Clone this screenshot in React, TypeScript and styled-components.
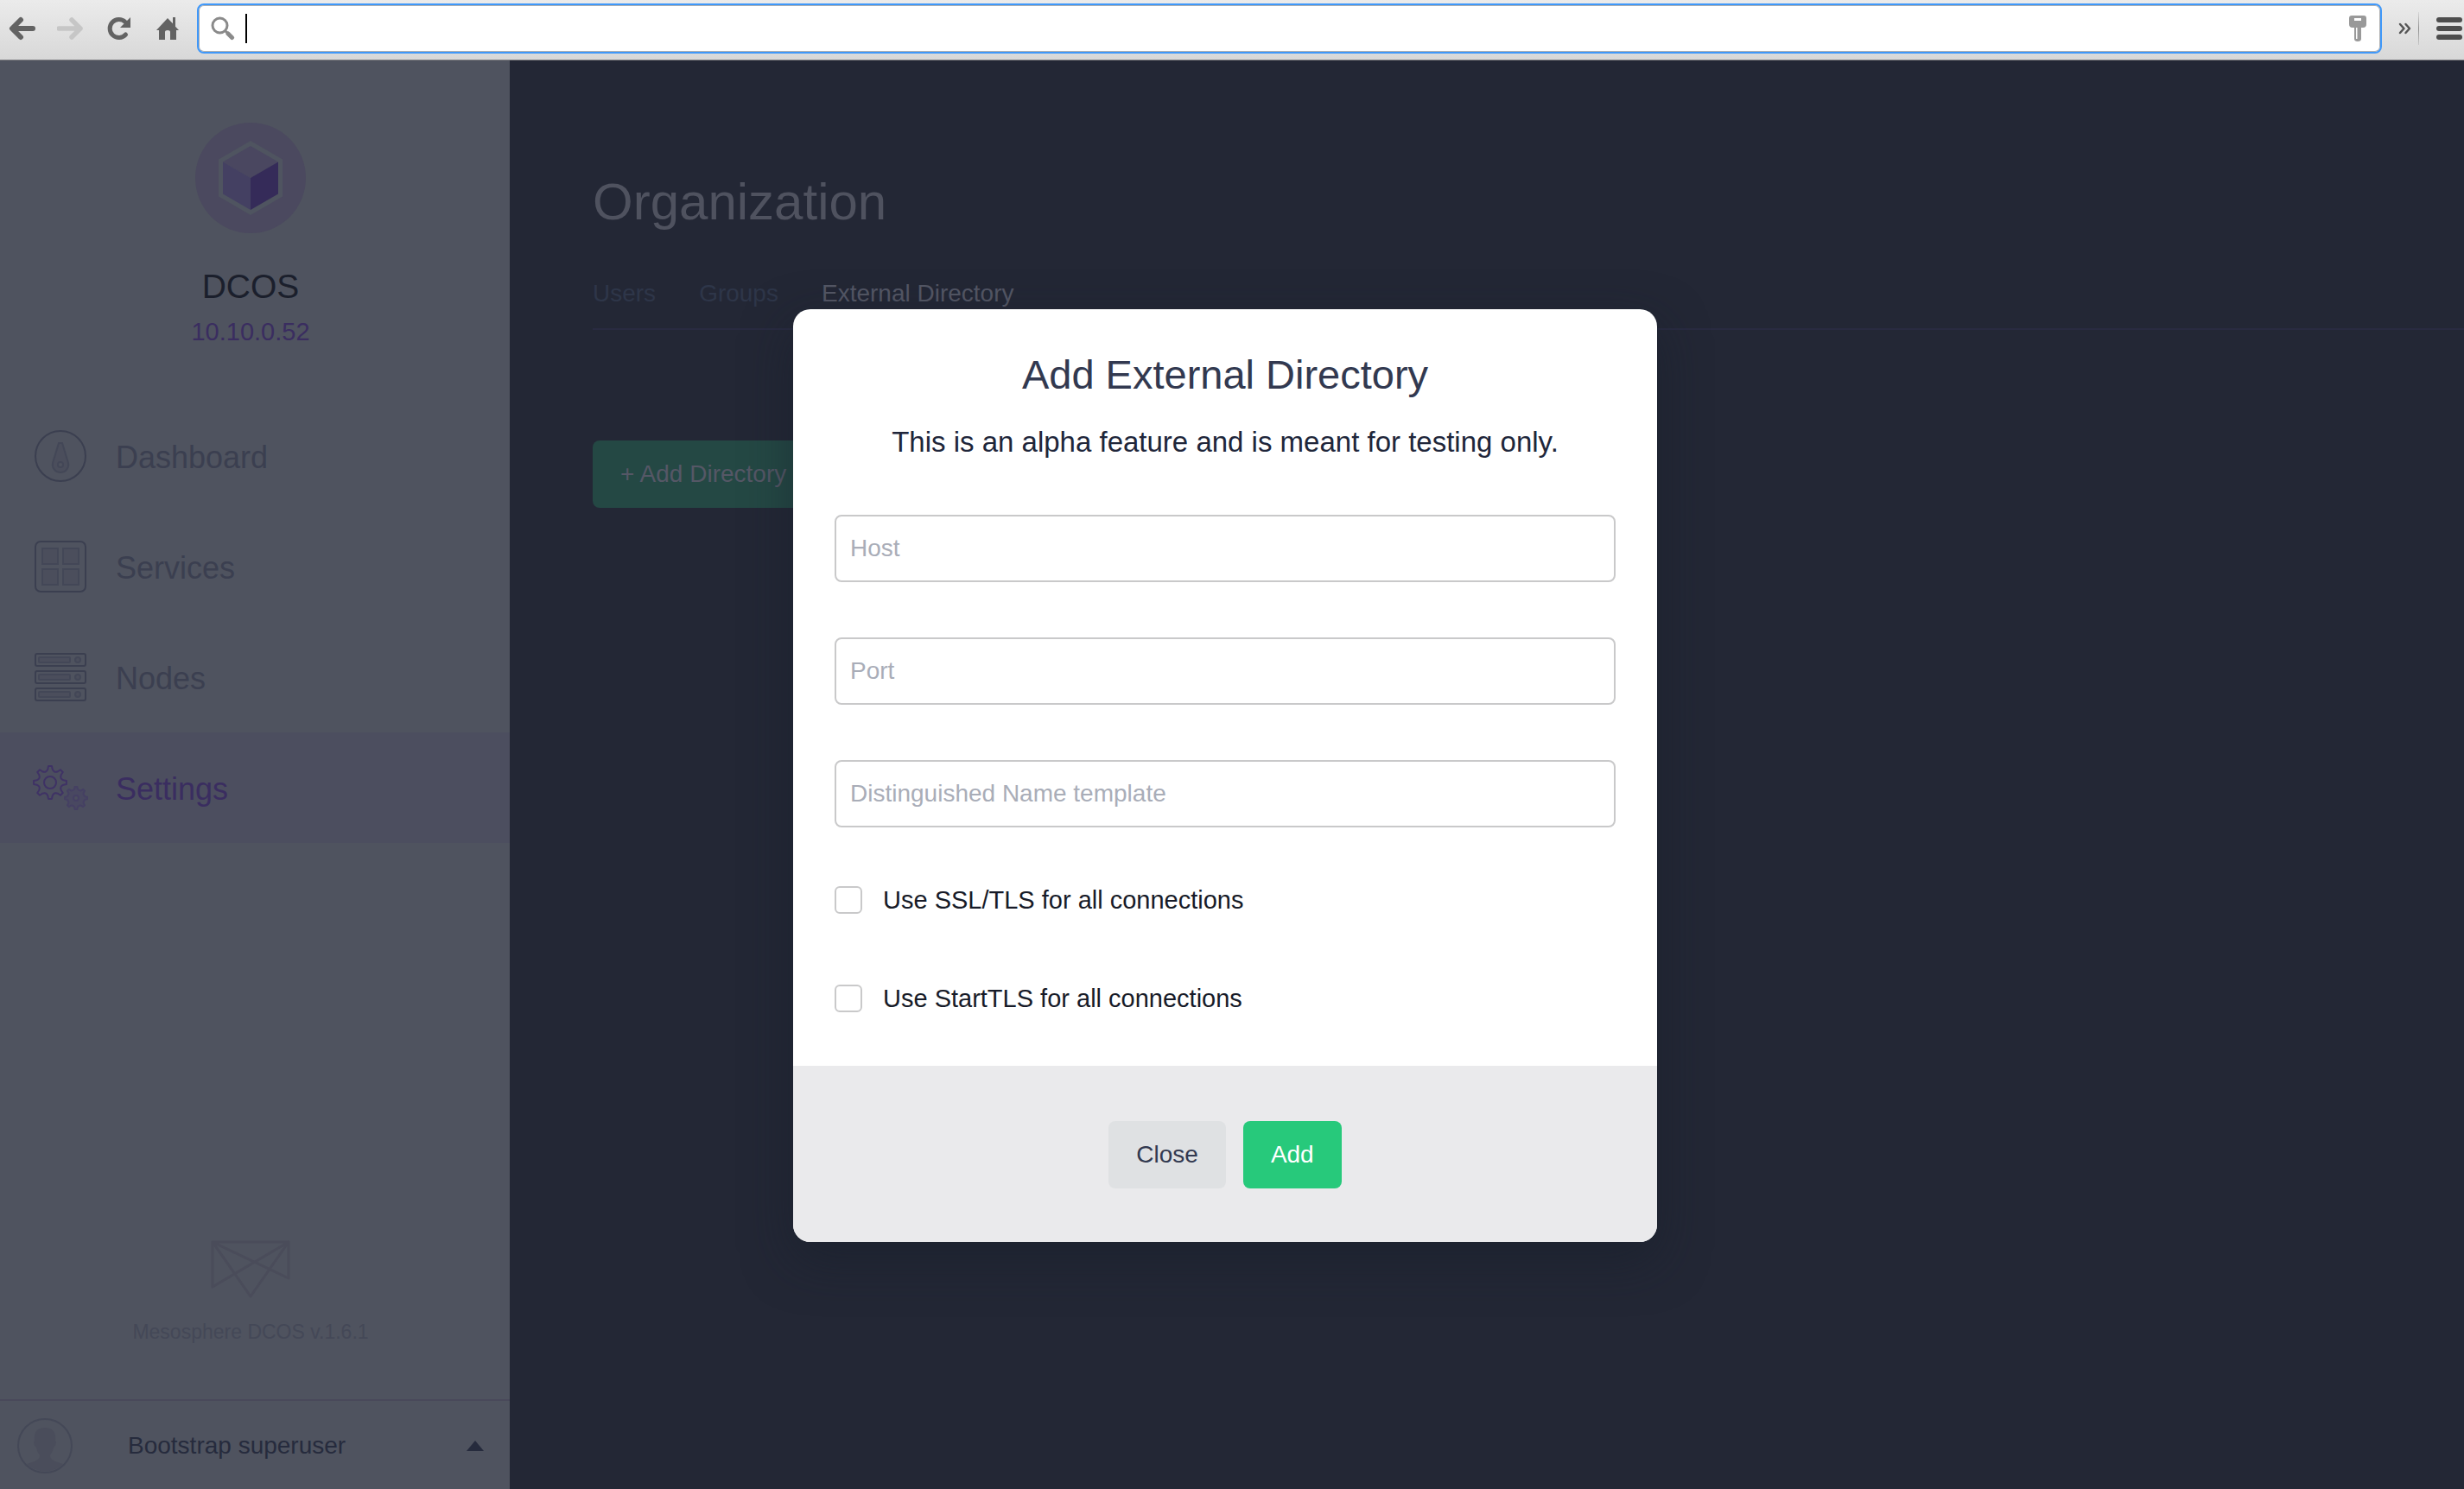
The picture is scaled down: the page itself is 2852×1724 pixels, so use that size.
import React from 'react';
import styled, { createGlobalStyle } from 'styled-components';

const sans = "'Liberation Sans', Arial, Helvetica, sans-serif";

const GlobalStyle = createGlobalStyle`
  *, *::before, *::after { box-sizing: border-box; }
  body { margin: 0; background: #232735; font-family: ${sans}; font-size: 28px; line-height: 32px; }
  button, input { font: inherit; }
  h1, h2, p, ul { margin: 0; padding: 0; font-weight: 400; }
  ul { list-style: none; }
  a { color: inherit; text-decoration: none; }
  svg { display: block; flex: none; }
`;

const Page = styled.div`
  display: flex;
  flex-direction: column;
  min-height: 100vh;
`;

/* ---------- browser toolbar ---------- */

const Toolbar = styled.header`
  display: flex;
  align-items: center;
  padding: 4px 2px 7px 10px;
  background: linear-gradient(#ebebeb, #d8d8d8);
  border-bottom: 1px solid #7d7d80;
`;

const ToolGroup = styled.div`
  display: flex;
  gap: 24px;
  margin-right: 18px;
`;

const ToolButton = styled.button`
  display: flex;
  align-items: center;
  justify-content: center;
  padding: 0;
  border: 0;
  background: none;
`;

const AddressBar = styled.label`
  flex: 1;
  display: flex;
  align-items: center;
  height: 58px;
  padding: 0 16px 0 14px;
  background: #fff;
  border: 2px solid #3f98fa;
  border-radius: 8px;
  box-shadow: inset 0 0 0 1px #b0b0b0;
`;

const Caret = styled.span`
  width: 2px;
  height: 34px;
  margin-left: 12px;
  background: #000;
`;

const AddressInput = styled.input`
  flex: 1;
  min-width: 0;
  border: 0;
  outline: 0;
  background: none;
`;

const Separator = styled.span`
  width: 1px;
  height: 38px;
  margin: 0 20px 0 8px;
  background: linear-gradient(#d8d8d8, #8d8d8d, #c8c8c8);
`;

/* ---------- application frame ---------- */

const AppFrame = styled.div`
  position: relative;
  flex: 1;
  display: flex;
`;

const Sidebar = styled.aside`
  display: flex;
  flex-direction: column;
  flex: 0 0 590px;
  background: #4f535f;
`;

const Brand = styled.div`
  display: flex;
  flex-direction: column;
  align-items: center;
  padding: 72px 10px 64px 0;
`;

const BrandName = styled.h2`
  margin-top: 38px;
  font-size: 39px;
  line-height: 48px;
  color: #1b1f2c;
`;

const BrandHost = styled.p`
  margin-top: 12px;
  font-size: 29px;
  color: #3a2d60;
`;

const NavLink = styled.a<{ $active?: boolean }>`
  display: flex;
  align-items: center;
  gap: 32px;
  height: 128px;
  padding-left: 38px;
  font-size: 36px;
  line-height: 40px;
  color: ${(p) => (p.$active ? '#3a2d60' : '#3b3f50')};
  background: ${(p) => (p.$active ? '#4c4e5f' : 'transparent')};
`;

const NavLabel = styled.span`
  padding-top: 4px;
`;

const Version = styled.div`
  display: flex;
  flex-direction: column;
  align-items: center;
  gap: 24px;
  margin-top: auto;
  padding: 0 10px 64px 0;
  font-size: 23px;
  line-height: 28px;
  color: #444857;
`;

const Account = styled.button`
  display: flex;
  align-items: center;
  padding: 18px 30px 16px 18px;
  border: 0;
  border-top: 2px solid #49495a;
  background: none;
  text-align: left;
  color: #262b3d;
`;

const AccountName = styled.span`
  flex: 1;
  margin-left: 62px;
`;

const Main = styled.main`
  flex: 1;
  min-width: 0;
  padding: 128px 0 0 96px;
`;

const Heading = styled.h1`
  font-size: 60px;
  line-height: 72px;
  color: #4f525f;
`;

const Tabs = styled.nav`
  display: flex;
  gap: 50px;
  margin-top: 54px;
  padding-bottom: 24px;
  border-bottom: 2px solid #292b41;
`;

const Tab = styled.a<{ $active?: boolean }>`
  color: ${(p) => (p.$active ? '#545765' : '#2e3649')};
`;

const Button = styled.button<{ $tone: 'muted' | 'plain' | 'success' }>`
  height: 78px;
  padding: 0 32px;
  border: 0;
  border-radius: 8px;
  color: ${(p) => ({ muted: '#555766', plain: '#323950', success: '#fff' })[p.$tone]};
  background: ${(p) => ({ muted: '#244844', plain: '#dfe1e3', success: '#27c97b' })[p.$tone]};
`;

const PageActions = styled.div`
  margin-top: 128px;
`;

/* ---------- dialog ---------- */

const Backdrop = styled.div`
  position: absolute;
  inset: 0;
  display: flex;
  align-items: center;
  justify-content: center;
  padding: 2px 16px 0 0;
`;

const Dialog = styled.form`
  width: 1000px;
  max-width: 100%;
  overflow: hidden;
  border-radius: 20px;
  background: #fff;
  box-shadow: 0 20px 56px rgba(22, 30, 42, 0.5);
`;

const DialogBody = styled.div`
  padding: 48px 48px 62px;
`;

const DialogTitle = styled.h2`
  font-size: 47px;
  line-height: 56px;
  text-align: center;
  color: #323950;
`;

const DialogNote = styled.p`
  margin: 28px 0 62px;
  font-size: 33px;
  line-height: 44px;
  text-align: center;
  color: #20263a;
`;

const Fields = styled.div`
  display: grid;
  gap: 64px;
`;

const TextField = styled.input`
  width: 100%;
  height: 78px;
  padding: 0 16px;
  border: 2px solid #c9c9ca;
  border-radius: 8px;
  background: #fff;
  color: #1b1f2c;
  &::placeholder { color: #a9adb8; opacity: 1; }
`;

const Checks = styled.div`
  display: grid;
  gap: 82px;
  margin-top: 68px;
`;

const CheckLabel = styled.label`
  display: flex;
  align-items: center;
  gap: 24px;
  font-size: 29px;
  color: #171b28;
`;

const CheckBox = styled.input`
  appearance: none;
  width: 32px;
  height: 32px;
  margin: 0;
  border: 2px solid #c9c9ca;
  border-radius: 6px;
  background: #fff;
`;

const DialogFooter = styled.footer`
  display: flex;
  justify-content: center;
  gap: 20px;
  padding: 64px 48px 62px;
  background: #eaeaec;
`;

/* ---------- drawings ---------- */

function gearPath(cx: number, cy: number, r: number, valley: number) {
  const at = (radius: number, deg: number) => {
    const a = (deg * Math.PI) / 180;
    return `${(cx + radius * Math.cos(a)).toFixed(2)} ${(cy + radius * Math.sin(a)).toFixed(2)}`;
  };
  let d = '';
  for (let i = 0; i < 8; i++) {
    const a = i * 45;
    d += `${i ? 'L' : 'M'}${at(r, a - 6)}L${at(r, a + 6)}L${at(r * 0.82, a + 10)}Q${at(r * valley, a + 22.5)} ${at(r * 0.82, a + 35)}`;
  }
  return d + 'Z';
}

const BackIcon = ({ color }: { color: string }) => (
  <svg width="32" height="32" viewBox="0 0 32 32" fill="none" stroke={color} strokeWidth="6" strokeLinecap="round" strokeLinejoin="round">
    <path d="M28 16H5M14 6L4 16l10 10" />
  </svg>
);

const ForwardIcon = ({ color }: { color: string }) => (
  <svg width="32" height="32" viewBox="0 0 32 32" fill="none" stroke={color} strokeWidth="5.500" strokeLinecap="round" strokeLinejoin="round">
    <path d="M2 16h25M17 6l10 10-10 10" />
  </svg>
);

const ReloadIcon = () => (
  <svg width="32" height="32" viewBox="0 0 32 32">
    <path d="M23 8.500A10.500 10.500 0 1 0 23.500 23" fill="none" stroke="#636363" strokeWidth="5" strokeLinecap="round" />
    <path d="M29 3v12H17z" fill="#636363" />
  </svg>
);

const HomeIcon = () => (
  <svg width="32" height="32" viewBox="0 0 32 32" fill="#636363">
    <path d="M16 4L3 18h3v11h7v-9q0-2 3-2t3 2v9h7V18h3l-4-4.300V3h-3v7.200z" />
  </svg>
);

const SearchIcon = () => (
  <svg width="28" height="28" viewBox="0 0 28 28" fill="none" stroke="#8a8a8a">
    <circle cx="10.500" cy="10.500" r="8.500" strokeWidth="3" />
    <path d="M17 17l2.500 2.500" strokeWidth="3" />
    <path d="M20 20l4.500 4.500" strokeWidth="5" strokeLinecap="round" />
  </svg>
);

const KeyIcon = () => (
  <svg width="20" height="32" viewBox="0 0 20 32">
    <path fill="#999" fillRule="evenodd" d="M3 1h14q3 0 3 3v7q0 4-4 4h-2v13q0 3-4 3t-4-3V15H4q-4 0-4-4V4q0-3 3-3zM6 4v3h8V4zM8 15v13h1.500V15z" />
  </svg>
);

const CubeLogo = () => (
  <svg width="128" height="128" viewBox="0 0 128 128">
    <circle cx="64" cy="64" r="64" fill="#4b495f" />
    <path d="M64 21l37 21.500v43L64 107 27 85.500v-43z" fill="#4f5460" />
    <path d="M64 27l32 18.500L64 64 32 45.500z" fill="#4a4760" />
    <path d="M32 45.500L64 64v37L32 82.500z" fill="#444062" />
    <path d="M96 45.500L64 64v37l32-18.500z" fill="#352b59" />
  </svg>
);

const NavSvg = ({ children, stroke = '#3b3f50' }: { children: React.ReactNode; stroke?: string }) => (
  <svg width="64" height="64" viewBox="0 0 64 64" fill="none" stroke={stroke} strokeWidth="2">
    {children}
  </svg>
);

const soft = { stroke: '#434757', fill: '#4b4e5c' };

const DashboardIcon = () => (
  <NavSvg>
    <circle cx="32" cy="32" r="29" />
    <path {...soft} d="M30 17h4l7 23a9.200 9.200 0 1 1-18 0z" />
    <circle {...soft} cx="32" cy="42" r="3" fill="#4f535f" />
  </NavSvg>
);

const ServicesIcon = () => (
  <NavSvg>
    <rect x="3" y="3" width="58" height="58" rx="6" />
    {[11, 35].map((y) => [11, 35].map((x) => <rect key={`${x}-${y}`} {...soft} x={x} y={y} width="18" height="18" />))}
  </NavSvg>
);

const NodesIcon = () => (
  <NavSvg>
    {[5, 25, 45].map((y) => (
      <g key={y}>
        <rect x="3" y={y} width="58" height="14" rx="2" />
        <rect {...soft} x="7" y={y + 4} width="36" height="6" rx="1" />
        <circle {...soft} cx="52" cy={y + 7} r="3" />
      </g>
    ))}
  </NavSvg>
);

const SettingsIcon = () => (
  <NavSvg stroke="#3f3265">
    <path d={gearPath(20, 26, 19, 0.62)} strokeLinejoin="round" />
    <circle cx="20" cy="26" r="7" />
    <g stroke="#454063">
      <path d={gearPath(50, 44, 13, 0.68)} strokeLinejoin="round" fill="#494861" />
      <circle cx="50" cy="44" r="3" fill="#4c4e5f" />
    </g>
  </NavSvg>
);

const MesosphereLogo = () => (
  <svg width="92" height="68" viewBox="0 0 92 68" fill="none" stroke="#4a4c5a" strokeWidth="3" strokeLinejoin="round">
    <path d="M2 2h88v42L2 2v52L90 2 46 65 2 2" />
  </svg>
);

const Avatar = () => (
  <svg width="68" height="68" viewBox="0 0 68 68">
    <circle cx="34" cy="34" r="31" fill="none" stroke="#444857" strokeWidth="2" />
    <path fill="#4a4d5b" d="M34 13c9 0 13 5 12 15 2 2 0 7-2 8-1 5-3 7-4 9 0 5 3 6 15 10a30 30 0 0 1-42 0c12-4 15-5 15-10-1-2-3-4-4-9-2-1-4-6-2-8-1-10 3-15 12-15z" />
  </svg>
);

/* ---------- page ---------- */

const navItems = [
  { label: 'Dashboard', Icon: DashboardIcon },
  { label: 'Services', Icon: ServicesIcon },
  { label: 'Nodes', Icon: NodesIcon },
  { label: 'Settings', Icon: SettingsIcon, active: true },
];

const tabs = ['Users', 'Groups', 'External Directory'];
const fields = ['Host', 'Port', 'Distinguished Name template'];
const options = ['Use SSL/TLS for all connections', 'Use StartTLS for all connections'];

export default function App() {
  return (
    <Page>
      <GlobalStyle />
      <Toolbar>
        <ToolGroup>
          <ToolButton aria-label="Back"><BackIcon color="#636363" /></ToolButton>
          <ToolButton aria-label="Forward"><ForwardIcon color="#c6c6c6" /></ToolButton>
          <ToolButton aria-label="Reload"><ReloadIcon /></ToolButton>
          <ToolButton aria-label="Home"><HomeIcon /></ToolButton>
        </ToolGroup>
        <AddressBar>
          <SearchIcon />
          <Caret />
          <AddressInput type="text" aria-label="Address" />
          <KeyIcon />
        </AddressBar>
        <ToolButton aria-label="More extensions">
          <svg width="34" height="16" viewBox="0 0 34 16" fill="none" stroke="#555" strokeWidth="2.500" strokeLinejoin="round" strokeLinecap="round">
            <path d="M21 3l4.500 5-4.500 5M27.500 3L32 8l-4.500 5" />
          </svg>
        </ToolButton>
        <Separator />
        <ToolButton aria-label="Menu">
          <svg width="30" height="26" viewBox="0 0 30 26" fill="#4d4d4d">
            {[0, 10, 20].map((y) => <rect key={y} y={y} width="30" height="6" rx="3" />)}
          </svg>
        </ToolButton>
      </Toolbar>

      <AppFrame>
        <Sidebar>
          <Brand>
            <CubeLogo />
            <BrandName>DCOS</BrandName>
            <BrandHost>10.10.0.52</BrandHost>
          </Brand>
          <nav>
            <ul>
              {navItems.map(({ label, Icon, active }) => (
                <li key={label}>
                  <NavLink href="#" $active={active}><Icon /><NavLabel>{label}</NavLabel></NavLink>
                </li>
              ))}
            </ul>
          </nav>
          <Version>
            <MesosphereLogo />
            <p>Mesosphere DCOS v.1.6.1</p>
          </Version>
          <Account type="button">
            <Avatar />
            <AccountName>Bootstrap superuser</AccountName>
            <svg width="20" height="12" viewBox="0 0 20 12" fill="#262b3d"><path d="M10 0l10 12H0z" /></svg>
          </Account>
        </Sidebar>

        <Main>
          <Heading>Organization</Heading>
          <Tabs>
            {tabs.map((tab) => <Tab key={tab} href="#" $active={tab === 'External Directory'}>{tab}</Tab>)}
          </Tabs>
          <PageActions>
            <Button type="button" $tone="muted">+ Add Directory</Button>
          </PageActions>
        </Main>

        <Backdrop>
          <Dialog role="dialog" aria-labelledby="dialog-title" onSubmit={(e) => e.preventDefault()}>
            <DialogBody>
              <DialogTitle id="dialog-title">Add External Directory</DialogTitle>
              <DialogNote>This is an alpha feature and is meant for testing only.</DialogNote>
              <Fields>
                {fields.map((name) => <TextField key={name} type="text" placeholder={name} aria-label={name} />)}
              </Fields>
              <Checks>
                {options.map((name) => (
                  <CheckLabel key={name}><CheckBox type="checkbox" />{name}</CheckLabel>
                ))}
              </Checks>
            </DialogBody>
            <DialogFooter>
              <Button type="button" $tone="plain">Close</Button>
              <Button type="submit" $tone="success">Add</Button>
            </DialogFooter>
          </Dialog>
        </Backdrop>
      </AppFrame>
    </Page>
  );
}
